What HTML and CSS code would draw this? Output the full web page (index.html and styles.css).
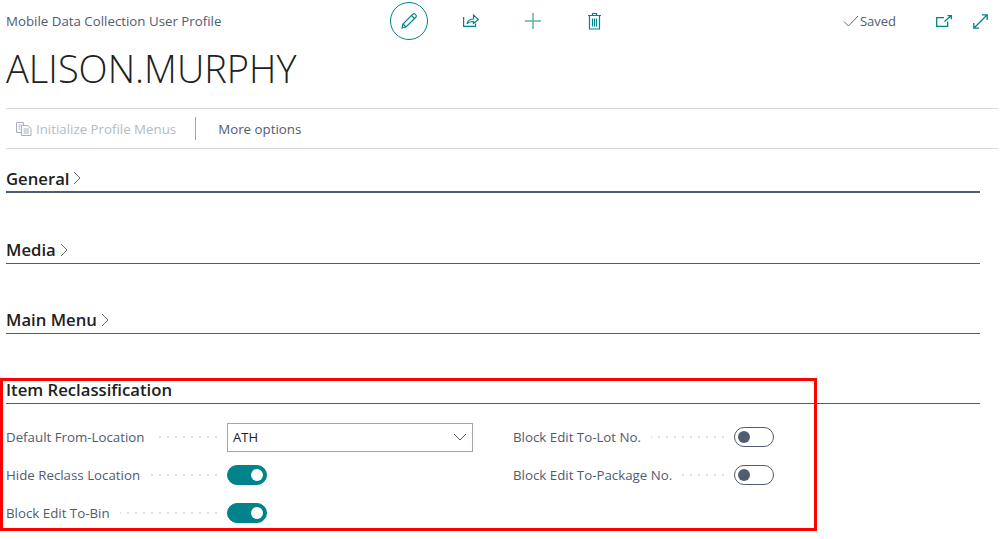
FILE: index.html
```html
<!DOCTYPE html>
<html lang="en">
<head>
    <meta charset="UTF-8">
    <meta name="viewport" content="width=device-width, initial-scale=1.0">
    <title>Mobile Data Collection User Profile</title>
    <link rel="stylesheet" href="styles.css">
</head>
<body>
    <div class="page">
        <div class="topbar">
            <div class="caption">Mobile Data Collection User Profile</div>
            <div class="actions">
                <button class="icon-btn icon-btn-edit" aria-label="Edit">
                    <svg width="18" height="18" viewBox="0 0 18 18" fill="none" stroke="#00838a" stroke-width="1.2"><path d="M2 16l1-4L12.8 2.2a1.6 1.6 0 0 1 2.3 0l.7.7a1.6 1.6 0 0 1 0 2.3L6 15z"/><path d="M3 12l3 3M11.5 3.5l3 3"/></svg>
                </button>
                <button class="icon-btn" aria-label="Share">
                    <svg width="16" height="16" viewBox="0 0 16 16" fill="none" stroke="#00838a" stroke-width="1.2"><path d="M.6 4v9.400h12v-3"/><path d="M4 11c.5-3 3-5 6.500-5V2L15.500 6.500 10.500 10.500V8.500c-2.500 0-5 .5-6.500 2.500z"/></svg>
                </button>
                <button class="icon-btn" aria-label="New">
                    <svg width="18" height="18" viewBox="0 0 18 18" fill="none" stroke="#5fb0b4" stroke-width="1.500"><path d="M9 1v16M1 9h16"/></svg>
                </button>
                <button class="icon-btn" aria-label="Delete">
                    <svg width="18" height="18" viewBox="0 0 18 18" fill="none" stroke="#00838a" stroke-width="1.200"><path d="M2 3.500h13M6.500 3.500v-2h4v2M3.500 3.500v13.500h10V3.500M6.500 6.500v8M8.500 6.500v8M10.500 6.500v8"/></svg>
                </button>
            </div>
            <div class="saved">
                <svg width="16" height="12" viewBox="0 0 16 12" fill="none" stroke="#5f6b80" stroke-width="1"><path d="M1 6.500l4.500 4.500L15 1"/></svg>
                <span>Saved</span>
            </div>
            <div class="window-btns">
                <svg width="16" height="12" viewBox="0 0 16 12" fill="none" stroke="#00838a" stroke-width="1.300"><path d="M8 2.600H.7v8.700h11V6.500"/><path d="M8.500 6.500L15 .8M11.500.7h3.800v3.600"/></svg>
                <svg width="15" height="15" viewBox="0 0 15 15" fill="none" stroke="#00838a" stroke-width="1.300"><path d="M1 14L14 1M9 .8h5.200V6M.8 9v5.200H6"/></svg>
            </div>
        </div>

        <h1 class="record-title">ALISON.MURPHY</h1>

        <div class="action-bar">
            <div class="action action-disabled">
                <svg width="16" height="14" viewBox="0 0 16 14" fill="none" stroke="#a9afba" stroke-width="1"><path d="M5.500 10.500H.5V.5h7v3"/><path d="M2.500 3h3M2.500 5h2M2.500 7h2"/><path d="M5.500 3.500h6l3.500 3v7H5.500z"/><path d="M7.500 7h5.500M7.500 9h5.500M7.500 11h5.500"/></svg>
                <span>Initialize Profile Menus</span>
            </div>
            <div class="action-sep"></div>
            <div class="action">More options</div>
        </div>

        <section class="group group-first">
            <h2 class="group-title">General <svg class="chev" width="8" height="14" viewBox="0 0 8 14" fill="none" stroke="#5f6b80" stroke-width="1"><path d="M1 1l6 6-6 6"/></svg></h2>
        </section>
        <section class="group">
            <h2 class="group-title">Media <svg class="chev" width="8" height="14" viewBox="0 0 8 14" fill="none" stroke="#5f6b80" stroke-width="1"><path d="M1 1l6 6-6 6"/></svg></h2>
        </section>
        <section class="group">
            <h2 class="group-title">Main Menu <svg class="chev" width="8" height="14" viewBox="0 0 8 14" fill="none" stroke="#5f6b80" stroke-width="1"><path d="M1 1l6 6-6 6"/></svg></h2>
        </section>
        <section class="group">
            <h2 class="group-title">Item Reclassification</h2>
        </section>

        <div class="fields">
            <div class="field-col">
                <div class="field">
                    <div class="field-head"><span class="field-label">Default From-Location</span><span class="leader"></span></div>
                    <div class="select">
                        <span>ATH</span>
                        <svg width="14" height="8" viewBox="0 0 14 8" fill="none" stroke="#505c6f" stroke-width="1"><path d="M1 1l6 6 6-6"/></svg>
                    </div>
                </div>
                <div class="field">
                    <div class="field-head"><span class="field-label">Hide Reclass Location</span><span class="leader"></span></div>
                    <span class="toggle toggle-on"></span>
                </div>
                <div class="field">
                    <div class="field-head"><span class="field-label">Block Edit To-Bin</span><span class="leader"></span></div>
                    <span class="toggle toggle-on"></span>
                </div>
            </div>
            <div class="field-col">
                <div class="field">
                    <div class="field-head"><span class="field-label">Block Edit To-Lot No.</span><span class="leader"></span></div>
                    <span class="toggle"></span>
                </div>
                <div class="field">
                    <div class="field-head"><span class="field-label">Block Edit To-Package No.</span><span class="leader"></span></div>
                    <span class="toggle"></span>
                </div>
            </div>
        </div>
    </div>
    <div class="highlight"></div>
</body>
</html>
```

FILE: styles.css
```css
body {
    margin: 0;
    background: #fff;
    font-family: "Open Sans", "Noto Sans", Arial, sans-serif;
    color: #505c6f;
    overflow: hidden;
}
.page {
    padding: 0 6px;
    height: 539px;
    box-sizing: border-box;
}
.topbar {
    display: flex;
    align-items: center;
    height: 40px;
    padding-top: 1px;
}
.caption {
    width: 384px;
    font-size: 13.3px;
    color: #505c6f;
}
.actions {
    display: flex;
    gap: 24px;
}
.icon-btn {
    display: flex;
    align-items: center;
    justify-content: center;
    width: 38px;
    height: 38px;
    padding: 0;
    background: none;
    border: none;
    border-radius: 50%;
}
.icon-btn-edit {
    border: 1px solid #00838a;
}
.saved {
    display: flex;
    align-items: center;
    gap: 1px;
    margin-left: auto;
    font-size: 13px;
    color: #505c6f;
}
.window-btns {
    display: flex;
    align-items: center;
    gap: 21px;
    margin-left: 40px;
    margin-right: 10px;
}
.record-title {
    margin: 1px 0 0;
    height: 66px;
    font-size: 38px;
    font-weight: 300;
    line-height: 52px;
    color: #212121;
}
.action-bar {
    display: flex;
    align-items: center;
    height: 39px;
    padding-left: 10px;
    border-top: 1px solid #d5d8dc;
    border-bottom: 1px solid #d5d8dc;
    font-size: 13.3px;
}
.action {
    display: flex;
    align-items: center;
    gap: 4px;
}
.action-disabled {
    color: #b4bac4;
}
.action-sep {
    width: 1px;
    height: 23px;
    margin: 0 22px 0 19px;
    background: #a0a7b2;
}
.group {
    height: 70px;
    margin-right: 18px;
}
.group-first {
    height: 44px;
    margin-bottom: 27px;
}
.group-title {
    display: flex;
    align-items: center;
    height: 44px;
    margin: 0;
    padding-top: 16px;
    box-sizing: border-box;
    border-bottom: 1px solid #505c6f;
    font-size: 16.7px;
    font-weight: 600;
    color: #212121;
}
.group-first .group-title {
    border-bottom: 2px solid #505c6f;
}
.chev {
    margin-left: 4px;
}
.fields {
    display: flex;
    gap: 40px;
    margin-top: -12px;
}
.field-col {
    display: flex;
    flex-direction: column;
    width: 467px;
}
.field {
    display: flex;
    align-items: center;
    height: 38px;
    font-size: 13.3px;
}
.field-head {
    display: flex;
    align-items: center;
    width: 221px;
}
.field-label {
    white-space: nowrap;
}
.leader {
    flex: 1;
    height: 2px;
    margin: 0 10px;
    background: repeating-linear-gradient(270deg, #dcdfe3 0 2px, transparent 2px 8px);
}
.select {
    display: flex;
    align-items: center;
    justify-content: space-between;
    box-sizing: border-box;
    width: 246px;
    height: 29px;
    padding: 0 5px 0 5px;
    border: 1px solid #a0a7b2;
    font-size: 13px;
    color: #212121;
}
.toggle {
    position: relative;
    display: block;
    box-sizing: border-box;
    width: 40px;
    height: 20px;
    border: 1px solid #505c6f;
    border-radius: 10px;
    background: #fff;
}
.toggle::after {
    content: "";
    position: absolute;
    top: 3px;
    left: 3px;
    width: 12px;
    height: 12px;
    border-radius: 50%;
    background: #505c6f;
}
.toggle-on {
    background: #00838a;
    border-color: #00838a;
}
.toggle-on::after {
    left: auto;
    right: 3px;
    background: #fff;
}
.highlight {
    position: absolute;
    left: 0;
    top: 378px;
    width: 817px;
    height: 153px;
    box-sizing: border-box;
    border: 3px solid #f00;
}
```
